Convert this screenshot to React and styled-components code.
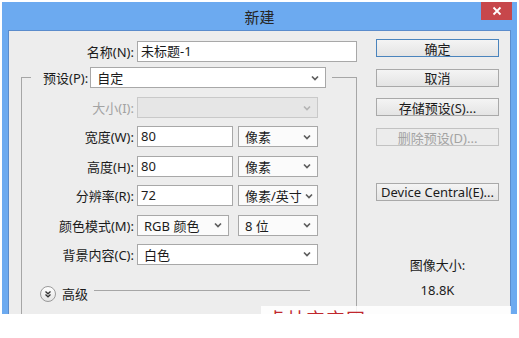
import React from "react";
import styled, { createGlobalStyle } from "styled-components";

const Global = createGlobalStyle`
  html, body { margin: 0; padding: 0; background: #ffffff; }
  body { font-family: "Noto Sans", "Noto Sans CJK SC", sans-serif; font-size: 13px; color: #1b1b1b; }
`;

const Page = styled.div`
  position: relative;
  width: 519px;
  height: 338px;
  overflow: hidden;
  background: #ffffff;
`;

const Window = styled.div`
  margin: 2px 2px 0 2px;
  width: 515px;
  height: 312px;
  background: #6caaf0;
  display: flex;
  flex-direction: column;
  overflow: hidden;
`;

const TitleBar = styled.div`
  height: 28px;
  display: grid;
  grid-template-columns: 1fr auto 1fr;
  align-items: center;
`;

const Title = styled.div`
  grid-column: 2;
  font-family: "Noto Sans CJK SC", sans-serif;
  font-size: 15px;
  color: #262626;
  padding-top: 1px;
`;

const CloseBtn = styled.div`
  grid-column: 3;
  justify-self: end;
  align-self: start;
  margin-right: 5px;
  width: 31px;
  height: 18px;
  background: #c7474b;
  color: #ffffff;
  display: flex;
  align-items: center;
  justify-content: center;
`;

const Body = styled.div`
  flex: 1;
  margin: 0 6px;
  background: #ededed;
  border: 1px solid #5b8ccc;
  border-bottom: none;
  display: grid;
  grid-template-columns: 336px 123px;
  column-gap: 19px;
  padding: 10px 11px 0 12px;
  overflow: hidden;
`;

const LeftCol = styled.div`
  display: flex;
  flex-direction: column;
`;

const Row = styled.div`
  display: flex;
  align-items: center;
  height: 21px;
  margin-bottom: ${p => (p.$last ? 0 : 8.4)}px;
`;

const Label = styled.label`
  width: ${p => p.$w}px;
  flex: none;
  box-sizing: border-box;
  padding-right: 3px;
  text-align: right;
  white-space: nowrap;
  color: ${p => (p.$disabled ? "#a3a3a3" : "#1b1b1b")};
`;

const TextBox = styled.div`
  width: ${p => p.$w}px;
  height: 21px;
  box-sizing: border-box;
  border: 1px solid #a8a8a8;
  background: #ffffff;
  padding: 0 3px;
  line-height: 19px;
  white-space: nowrap;
`;

const SelectBox = styled.div`
  width: ${p => p.$w}px;
  height: 21px;
  box-sizing: border-box;
  margin-left: ${p => p.$ml || 0}px;
  border: 1px solid ${p => (p.$disabled ? "#c9c9c9" : "#a8a8a8")};
  background: ${p => (p.$disabled ? "#e6e6e6" : p.$plain ? "#ffffff" : "#fbfbfb")};
  padding: 0 6px 0 6px;
  display: flex;
  align-items: center;
  justify-content: space-between;
  gap: 3px;
  white-space: nowrap;
  color: #1b1b1b;
`;

const Group = styled.fieldset`
  margin: 5px 0 0 0;
  padding: 9px 0 0 9px;
  min-width: 0;
  flex: 1;
  border: 1px solid #a6a6a6;
  border-bottom: none;
`;

const Legend = styled.legend`
  padding: 0 6px 0 12px;
  display: flex;
  align-items: center;
  height: 21px;
`;

const LegendLabel = styled.span`
  margin-right: 2px;
  white-space: nowrap;
`;

const Advanced = styled.div`
  display: flex;
  align-items: center;
  height: 14px;
  margin-top: 22px;
  margin-left: 9px;
`;

const ToggleCircle = styled.div`
  width: 14px;
  height: 14px;
  border-radius: 50%;
  border: 1px solid #9a9a9a;
  background: linear-gradient(#ffffff, #e4e4e4);
  display: flex;
  align-items: center;
  justify-content: center;
`;

const AdvText = styled.span`
  margin-left: 6px;
  font-size: 13px;
`;

const Rule = styled.div`
  width: 216px;
  height: 1px;
  background: #a6a6a6;
  margin-left: 6px;
  margin-bottom: 6px;
`;

const RightCol = styled.div`
  display: flex;
  flex-direction: column;
  margin-top: -2px;
`;

const Button = styled.div`
  height: 18px;
  box-sizing: border-box;
  margin-top: ${p => p.$mt || 0}px;
  margin-bottom: 11.7px;
  border: 1px solid ${p => (p.$primary ? "#4a84bd" : p.$disabled ? "#c2c2c2" : "#a9a9a9")};
  background: ${p => (p.$disabled ? "#ececec" : "linear-gradient(#f4f4f4, #e4e4e4)")};
  color: ${p => (p.$disabled ? "#a3a3a3" : "#1b1b1b")};
  display: flex;
  align-items: center;
  justify-content: center;
  white-space: nowrap;
  font-size: 13px;
`;

const Info = styled.div`
  margin-top: 44px;
  text-align: center;
  line-height: 16px;
`;

const InfoValue = styled.div`
  margin-top: 8px;
  text-align: center;
`;

const Watermark = styled.div`
  position: absolute;
  left: 261px;
  top: 306px;
  width: 250px;
  height: 8px;
  overflow: hidden;
  background: rgba(255, 255, 255, 0.85);
  padding: 3px 0 0 5px;
  box-sizing: border-box;
  color: #c0272d;
  font-family: "Noto Sans CJK SC", sans-serif;
  font-size: 19px;
  line-height: 20px;
  letter-spacing: 1px;
`;

function Chevron({ disabled }) {
  return (
    <svg width="8" height="6" viewBox="0 0 8 6" style={{ flex: "none" }}>
      <polyline points="1,1.5 4,4.5 7,1.5" fill="none" stroke={disabled ? "#b4b4b4" : "#5e5e5e"} strokeWidth="1.7" />
    </svg>
  );
}

function Select({ children, ...rest }) {
  return (
    <SelectBox {...rest}>
      <span>{children}</span>
      <Chevron disabled={rest.$disabled} />
    </SelectBox>
  );
}

export default function App() {
  return (
    <Page>
      <Global />
      <Window>
        <TitleBar>
          <Title>新建</Title>
          <CloseBtn>
            <svg width="10" height="10" viewBox="0 0 10 10">
              <path d="M1.5 1.5 L8.5 8.5 M8.5 1.5 L1.5 8.5" stroke="#ffffff" strokeWidth="1.8" />
            </svg>
          </CloseBtn>
        </TitleBar>
        <Body>
          <LeftCol>
            <Row $last>
              <Label $w={116}>名称(N):</Label>
              <TextBox $w={222}>未标题-1</TextBox>
            </Row>
            <Group>
              <Legend>
                <LegendLabel>预设(P):</LegendLabel>
                <Select $w={236} $plain>自定</Select>
              </Legend>
              <Row>
                <Label $w={106} $disabled>大小(I):</Label>
                <Select $w={181} $disabled></Select>
              </Row>
              <Row>
                <Label $w={106}>宽度(W):</Label>
                <TextBox $w={96}>80</TextBox>
                <Select $w={80} $ml={5}>像素</Select>
              </Row>
              <Row>
                <Label $w={106}>高度(H):</Label>
                <TextBox $w={96}>80</TextBox>
                <Select $w={80} $ml={5}>像素</Select>
              </Row>
              <Row>
                <Label $w={106}>分辨率(R):</Label>
                <TextBox $w={96}>72</TextBox>
                <Select $w={80} $ml={5}>像素/英寸</Select>
              </Row>
              <Row>
                <Label $w={106}>颜色模式(M):</Label>
                <Select $w={92}>RGB 颜色</Select>
                <Select $w={80} $ml={9}>8 位</Select>
              </Row>
              <Row $last>
                <Label $w={106}>背景内容(C):</Label>
                <Select $w={181} $plain>白色</Select>
              </Row>
              <Advanced>
                <ToggleCircle>
                  <svg width="8" height="8" viewBox="0 0 8 8">
                    <polyline points="1.5,1.5 4,3.8 6.5,1.5" fill="none" stroke="#333" strokeWidth="1.3" />
                    <polyline points="1.5,4.5 4,6.8 6.5,4.5" fill="none" stroke="#333" strokeWidth="1.3" />
                  </svg>
                </ToggleCircle>
                <AdvText>高级</AdvText>
                <Rule />
              </Advanced>
            </Group>
          </LeftCol>
          <RightCol>
            <Button $primary>确定</Button>
            <Button>取消</Button>
            <Button>存储预设(S)...</Button>
            <Button $disabled>删除预设(D)...</Button>
            <Button $mt={25.3}>Device Central(E)...</Button>
            <Info>图像大小:</Info>
            <InfoValue>18.8K</InfoValue>
          </RightCol>
        </Body>
      </Window>
      <Watermark>虎林宝宝网</Watermark>
    </Page>
  );
}
